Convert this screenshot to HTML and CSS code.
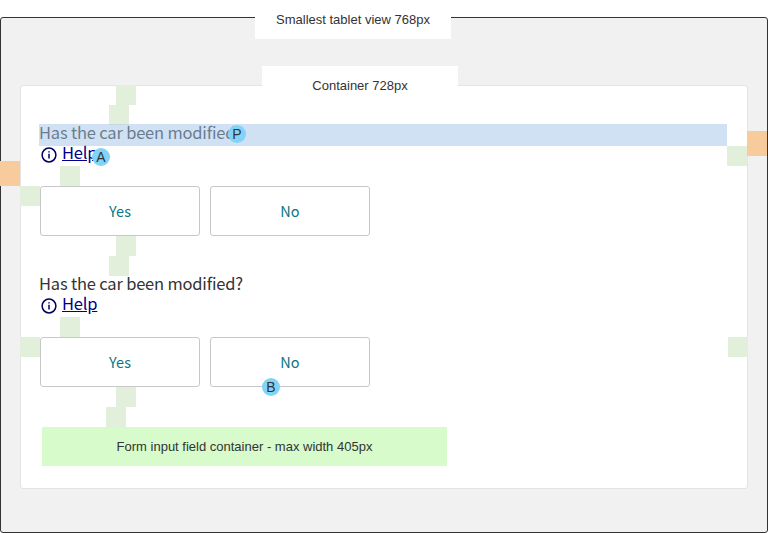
FILE: index.html
```html
<!DOCTYPE html>
<html lang="en">
<head>
<meta charset="utf-8">
<title>Tablet layout</title>
<link rel="stylesheet" href="styles.css">
</head>
<body>
<main class="viewport">
  <span class="label label-view">Smallest tablet view 768px</span>
  <span class="gutter gutter-left"></span>
  <span class="gutter gutter-right"></span>
  <section class="card">
    <span class="label label-container">Container 728px</span>
    <div class="space space-a first"></div>
    <div class="space space-b"></div>
    <div class="field">
      <div class="question highlighted"><span class="question-text">Has the car been modified?</span><span class="marker marker-p">P</span></div>
      <div class="help">
        <svg class="info" viewBox="0 0 16 16"><circle cx="8" cy="8" r="6.9"/><path d="M8 6.8V11.4M8 4.3V5.6"/></svg>
        <a class="help-link">Help</a><span class="marker marker-a">A</span>
      </div>
      <div class="space space-help"></div>
      <div class="options">
        <span class="pad pad-left"></span>
        <button class="option">Yes</button>
        <button class="option">No</button>
      </div>
      <span class="pad pad-right"></span>
    </div>
    <div class="space space-a"></div>
    <div class="space space-b"></div>
    <div class="field">
      <div class="question"><span class="question-text">Has the car been modified?</span></div>
      <div class="help">
        <svg class="info" viewBox="0 0 16 16"><circle cx="8" cy="8" r="6.9"/><path d="M8 6.8V11.4M8 4.3V5.6"/></svg>
        <a class="help-link">Help</a>
      </div>
      <div class="space space-help"></div>
      <div class="options">
        <span class="pad pad-left"></span>
        <button class="option">Yes</button>
        <button class="option">No<span class="marker marker-b">B</span></button>
        <span class="pad pad-end"></span>
      </div>
    </div>
    <div class="space space-a"></div>
    <div class="space space-c"></div>
    <div class="form-width">Form input field container - max width 405px</div>
  </section>
</main>
</body>
</html>
```
FILE: styles.css
```css
* { box-sizing: border-box; }
body {
  margin: 0;
  padding-top: 17px;
  background: #fff;
  color: #333;
  font-family: "Liberation Sans", Arial, sans-serif;
  font-size: 13px;
}
.viewport {
  position: relative;
  height: 516px;
  padding: 67px 19px 43px;
  border: 1px solid #333;
  border-radius: 3px;
  background: #f1f1f1;
}
.card {
  position: relative;
  height: 404px;
  border: 1px solid #e4e4e4;
  border-radius: 3px;
  background: #fff;
}
.label {
  position: absolute;
  z-index: 2;
  width: 196px;
  height: 39px;
  line-height: 39px;
  text-align: center;
  background: #fff;
}
.label-view { left: 254px; top: -18px; }
.label-container { left: 241px; top: -20px; }
.gutter {
  position: absolute;
  z-index: 1;
  width: 20px;
  height: 25px;
  background: #f8cb9c;
}
.gutter-left { left: -1px; top: 143px; }
.gutter-right { right: 0; top: 113px; }

/* Spacing blocks */
.space {
  position: relative;
  width: 20px;
  height: 20px;
  background: #e2efdb;
}
.space-a { margin-left: 95px; }
.space-b { margin-left: 88px; }
.space-c { margin-left: 85px; }
.space-help { margin-left: 39px; }
.first { margin-top: -1px; }
.pad {
  position: absolute;
  width: 20px;
  height: 20px;
  background: #e2efdb;
}
.pad-left { left: -20px; top: 0; }
.pad-right { right: 0; top: 22px; }
.pad-end { right: -1px; top: 0; }

.field {
  position: relative;
  margin-top: -1px;
}
.question, .help-link, .option {
  font-family: "Noto Sans CJK SC", "Noto Sans", sans-serif;
}
.question {
  position: relative;
  width: 688px;
  height: 22px;
  margin-left: 18px;
  font-size: 16.5px;
  letter-spacing: -.19px;
  line-height: 17px;
  white-space: nowrap;
}
.highlighted::after {
  content: "";
  position: absolute;
  inset: 0;
  background: rgba(161, 195, 231, .5);
}
.help {
  position: relative;
  display: flex;
  height: 20px;
  margin-left: 20px;
}
.info {
  width: 16px;
  height: 16px;
  margin: 1px 5px 0 0;
  fill: none;
  stroke: #00005c;
  stroke-width: 1.5;
}
.help-link {
  color: #00008b;
  font-size: 16.5px;
  letter-spacing: -.19px;
  line-height: 13px;
  text-decoration: underline;
}
.options {
  position: relative;
  display: flex;
  gap: 10px;
  margin-left: 19px;
}
.option {
  position: relative;
  width: 160px;
  height: 50px;
  padding: 0 0 2px;
  border: 1px solid #c8c8c8;
  border-radius: 3px;
  background: #fff;
  color: #0b7680;
  font-size: 14.5px;
}
.marker {
  position: absolute;
  z-index: 2;
  width: 18px;
  height: 18px;
  border-radius: 50%;
  background: #81d3f8;
  color: #333;
  font: 14px/18px "Liberation Sans", Arial, sans-serif;
  letter-spacing: 0;
  text-align: center;
}
.marker-p { left: 189px; top: 1px; }
.marker-a { left: 51px; top: 2px; }
.marker-b { left: 51px; top: 40px; }
.form-width {
  width: 405px;
  height: 39px;
  margin-left: 21px;
  line-height: 39px;
  text-align: center;
  background: #d7fbcb;
}
```
